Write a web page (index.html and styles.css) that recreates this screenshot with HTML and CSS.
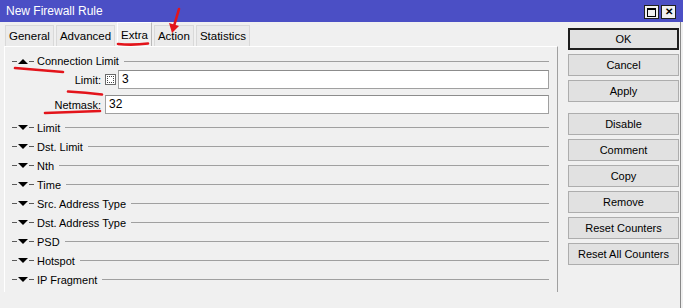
FILE: index.html
```html
<!DOCTYPE html>
<html lang="en">
<head>
    <meta charset="UTF-8">
    <title>New Firewall Rule</title>
    <link rel="stylesheet" href="styles.css">
</head>
<body>
    <div class="window">
        <div class="titlebar">
            <span class="title">New Firewall Rule</span>
            <div class="title-btns">
                <span class="tbtn"><span class="max-icon"></span></span>
                <span class="tbtn close">&#x2715;</span>
            </div>
        </div>
        <div class="main">
            <div class="left">
                <div class="tabs">
                    <div class="tab">General</div>
                    <div class="tab">Advanced</div>
                    <div class="tab active">Extra</div>
                    <div class="tab">Action</div>
                    <div class="tab">Statistics</div>
                </div>
                <div class="panel">
                    <div class="section">
                        <span class="dash"></span><span class="arrow up"></span><span class="dash"></span>
                        <span class="name">Connection Limit</span><span class="rule"></span>
                    </div>
                    <div class="field">
                        <label>Limit:</label>
                        <span class="check"></span>
                        <div class="input">3</div>
                    </div>
                    <div class="field last">
                        <label>Netmask:</label>
                        <div class="input">32</div>
                    </div>
                    <div class="section">
                        <span class="dash"></span><span class="arrow"></span><span class="dash"></span>
                        <span class="name">Limit</span><span class="rule"></span>
                    </div>
                    <div class="section">
                        <span class="dash"></span><span class="arrow"></span><span class="dash"></span>
                        <span class="name">Dst. Limit</span><span class="rule"></span>
                    </div>
                    <div class="section">
                        <span class="dash"></span><span class="arrow"></span><span class="dash"></span>
                        <span class="name">Nth</span><span class="rule"></span>
                    </div>
                    <div class="section">
                        <span class="dash"></span><span class="arrow"></span><span class="dash"></span>
                        <span class="name">Time</span><span class="rule"></span>
                    </div>
                    <div class="section">
                        <span class="dash"></span><span class="arrow"></span><span class="dash"></span>
                        <span class="name">Src. Address Type</span><span class="rule"></span>
                    </div>
                    <div class="section">
                        <span class="dash"></span><span class="arrow"></span><span class="dash"></span>
                        <span class="name">Dst. Address Type</span><span class="rule"></span>
                    </div>
                    <div class="section">
                        <span class="dash"></span><span class="arrow"></span><span class="dash"></span>
                        <span class="name">PSD</span><span class="rule"></span>
                    </div>
                    <div class="section">
                        <span class="dash"></span><span class="arrow"></span><span class="dash"></span>
                        <span class="name">Hotspot</span><span class="rule"></span>
                    </div>
                    <div class="section">
                        <span class="dash"></span><span class="arrow"></span><span class="dash"></span>
                        <span class="name">IP Fragment</span><span class="rule"></span>
                    </div>
                </div>
            </div>
            <div class="buttons">
                <button class="default">OK</button>
                <button>Cancel</button>
                <button>Apply</button>
                <button class="group">Disable</button>
                <button>Comment</button>
                <button>Copy</button>
                <button>Remove</button>
                <button>Reset Counters</button>
                <button>Reset All Counters</button>
            </div>
        </div>

        <!-- red hand-drawn marks on top of the screenshot -->
        <svg class="marks" width="683" height="308" viewBox="0 0 683 308">
            <g fill="none" stroke="#e3141b" stroke-width="2.6" stroke-linecap="round">
                <path d="M118 44 Q133 45.5 148 43.5"/>
                <path d="M179 9 L174 26"/>
                <path d="M15 68 Q40 70 63 72"/>
                <path d="M68 91.5 Q86 92.5 102 94.5"/>
                <path d="M45 113 Q72 112 100 111"/>
            </g>
            <path d="M169 23 L179 26 L172 33 Z" fill="#e3141b"/>
        </svg>
    </div>
</body>
</html>
```

FILE: styles.css
```css
body {
    margin: 0;
    background-color: #f0f0f0;
    font-family: "Liberation Sans", Arial, sans-serif;
    font-size: 11px;
    color: #000;
}

.window {
    position: relative;
    width: 683px;
    height: 308px;
    overflow: hidden;
    background: #f0f0f0;
}

.titlebar {
    height: 22px;
    background: #4b4fc5;
    display: flex;
    align-items: center;
    justify-content: space-between;
    padding: 0 7px 0 6px;
}

.title {
    color: #fff;
    font-size: 12px;
}

.title-btns {
    display: flex;
    gap: 2px;
    margin-top: 2px;
}

.tbtn {
    width: 13px;
    height: 12px;
    background: #f0f0f0;
    border: 1px solid #202020;
    display: flex;
    align-items: center;
    justify-content: center;
    font-size: 10px;
    font-weight: bold;
    line-height: 1;
}

.max-icon {
    width: 7px;
    height: 6px;
    border: 1px solid #000;
    border-top-width: 2px;
}

.main {
    display: flex;
    height: 286px;
}

.left {
    width: 558px;
}

.tabs {
    display: flex;
    align-items: flex-end;
    gap: 2px;
    height: 24px;
    padding-left: 5px;
    font-size: 11.5px;
}

.tab {
    height: 20px;
    line-height: 20px;
    padding: 0 3px;
    border: 1px solid #d9d9d9;
    border-bottom: none;
    background: #ebebeb;
}

.tab.active {
    height: 23px;
    line-height: 25px;
    background: #f0f0f0;
    border-color: #ffffff #b9b9b9 #b9b9b9 #ffffff;
}

.panel {
    margin-left: 4px;
    height: 240px;
    border-top: 1px solid #fff;
    border-left: 1px solid #fff;
    border-right: 1px solid #a0a0a0;
    padding: 5px 8px 0 7px;
}

.section {
    display: flex;
    align-items: center;
    height: 19px;
}

.section:first-child {
    height: 18px;
}

.dash {
    width: 5px;
    height: 1px;
    background: #5a5a5a;
}

.arrow {
    width: 0;
    height: 0;
    margin: 0 1px;
    border-left: 5px solid transparent;
    border-right: 5px solid transparent;
    border-top: 5px solid #000;
}

.arrow.up {
    border-top: none;
    border-bottom: 5px solid #000;
}

.name {
    margin-left: 3px;
    white-space: nowrap;
}

.rule {
    flex: 1;
    height: 1px;
    margin-left: 5px;
    background: #a0a0a0;
}

.field {
    display: flex;
    align-items: center;
    height: 19px;
    margin-bottom: 6px;
}

.field.last {
    margin-bottom: 4px;
}

.field label {
    width: 89px;
    margin-right: 4px;
    text-align: right;
}

.check {
    width: 9px;
    height: 9px;
    margin: 0 2px 0 0;
    border: 1px solid #6a6a6a;
    background: #fff;
    outline: 1px dotted #444;
    outline-offset: -3px;
}

.input {
    flex: 1;
    height: 17px;
    line-height: 17px;
    padding: 0 3px;
    border: 1px solid #a0a0a0;
    border-top-color: #8c8c8c;
    background: #fff;
    font-size: 12px;
}

.buttons {
    width: 112px;
    padding: 6px 0 0 10px;
    border-right: 1px solid #888;
    display: flex;
    flex-direction: column;
    gap: 4px;
}

.buttons button {
    width: 111px;
    height: 22px;
    padding: 0;
    background: #e1e1e1;
    border: 1px solid #adadad;
    font-family: inherit;
    font-size: 11px;
    color: #000;
}

.buttons button.default {
    border: 2px solid #1e1e1e;
}

.buttons button.group {
    margin-top: 7px;
}

.marks {
    position: absolute;
    left: 0;
    top: 0;
    pointer-events: none;
}
```
